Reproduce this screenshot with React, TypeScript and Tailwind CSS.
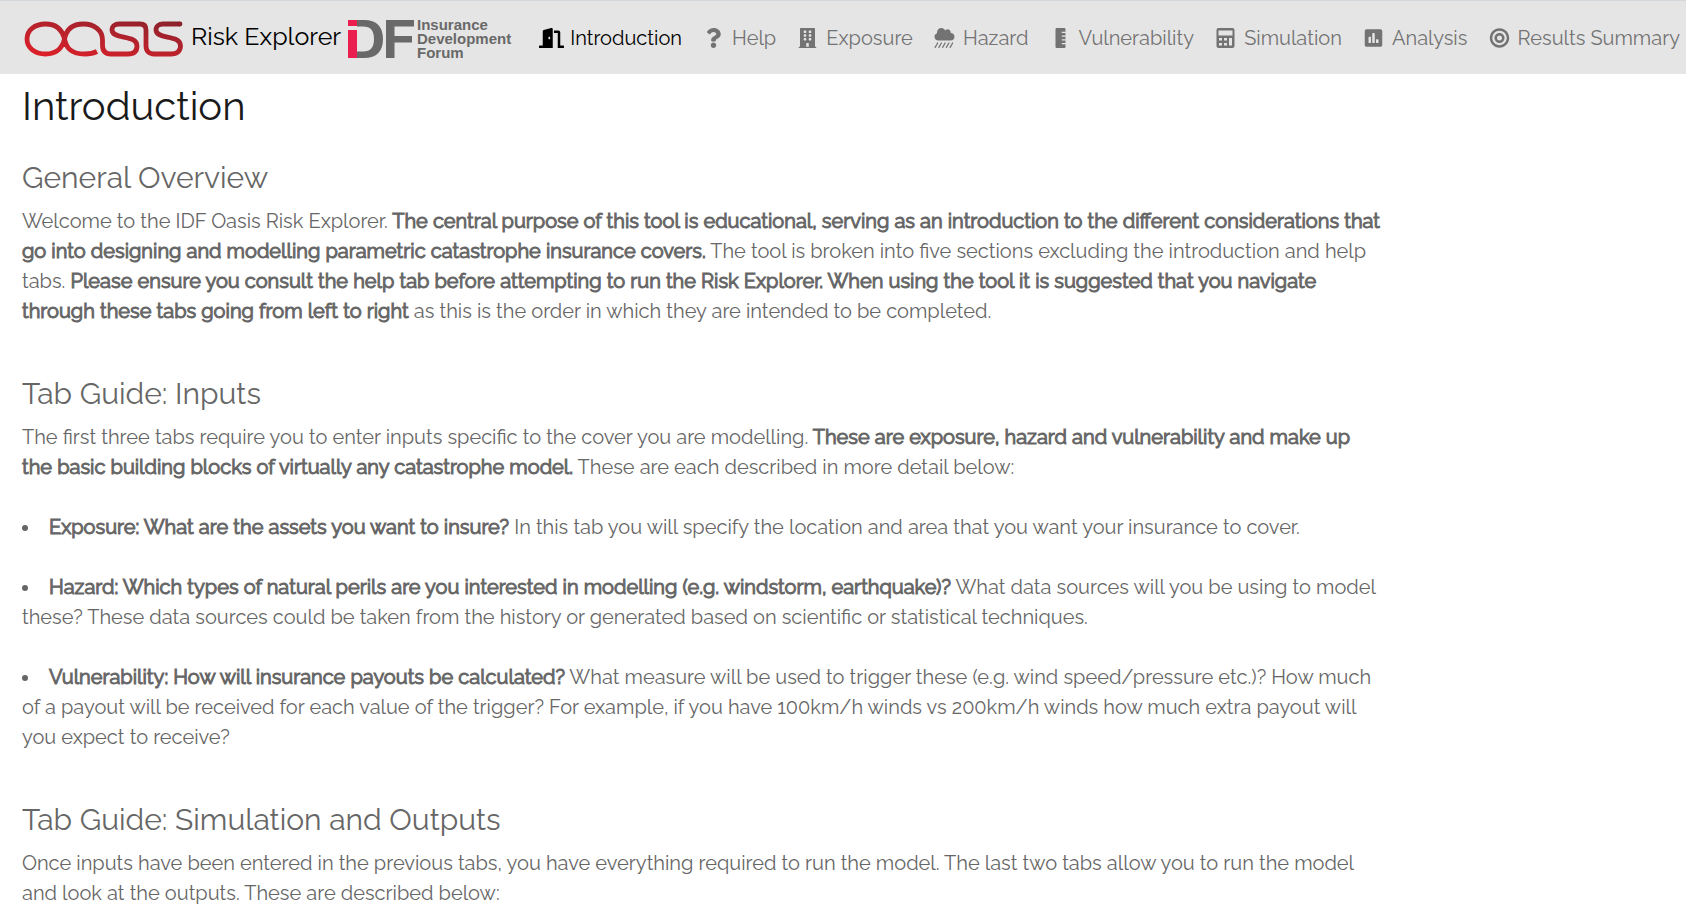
import { Fragment, type ReactNode } from "react";
import {
  FaDoorOpen,
  FaQuestion,
  FaBuilding,
  FaCloudShowersHeavy,
  FaRulerVertical,
  FaPoll,
  FaBullseye,
} from "react-icons/fa";

function CalculatorIcon({ className }: { className?: string }) {
  return (
    <svg className={className} viewBox="0 0 18 20" aria-hidden="true">
      <path
        fill="currentColor"
        fillRule="evenodd"
        d="M2 0H16Q18 0 18 2V18Q18 20 16 20H2Q0 20 0 18V2Q0 0 2 0ZM2 2.500V7.500H16V2.500ZM2.500 10V12.500H5.500V10ZM7.500 10V12.500H10.500V10ZM2.500 15V17.500H5.500V15ZM7.500 15V17.500H10.500V15ZM12.500 10V17.500H15.500V10Z"
      />
    </svg>
  );
}

const tabs = [
  { label: "Introduction", Icon: FaDoorOpen, active: true },
  { label: "Help", Icon: FaQuestion },
  { label: "Exposure", Icon: FaBuilding },
  { label: "Hazard", Icon: FaCloudShowersHeavy },
  { label: "Vulnerability", Icon: FaRulerVertical },
  { label: "Simulation", Icon: CalculatorIcon },
  { label: "Analysis", Icon: FaPoll },
  { label: "Results Summary", Icon: FaBullseye },
];

function OasisLogo() {
  return (
    <svg className="mt-0.5 h-[36px] w-[159px] shrink-0" viewBox="0 0 159 36" role="img" aria-label="Oasis">
      <defs>
        <linearGradient id="oasis-red" x1="0" y1="1" x2="1" y2="0">
          <stop offset="0" stopColor="#de2029" />
          <stop offset="0.5" stopColor="#b9222c" />
          <stop offset="1" stopColor="#8c222c" />
        </linearGradient>
      </defs>
      <path
        fill="none"
        stroke="url(#oasis-red)"
        strokeWidth="4.8"
        strokeLinejoin="round"
        d="M73 30.500C69 32.500 66 33 61 33C45 33 42 25 40.500 18C38.500 10 34 3 21.500 3C11 3 3 9 3 18C3 27 11 33 21.500 33C34 33 38.500 26 40.500 18C42 10 47 3 59.500 3C71 3 78.500 10 78.500 19V24C78.500 30 81 33 87 33H104C110 33 113 30 113 25C113 13 88 19 88 9C88 5 91 3 95 3H116C120 3 122 5 122 9V25C122 30 125 33 130 33H147C153 33 156.500 30 156.500 25C156.500 13 132 19 132 9C132 5 135 3 139 3H156"
      />
      <circle cx="156" cy="3" r="2.400" fill="#8c222c" />
    </svg>
  );
}

function ForumLogo() {
  return (
    <span className="mt-0.5 flex shrink-0 items-center gap-[3px]">
      <svg className="h-[38px] w-[66px]" viewBox="0 0 66 38" role="img" aria-label="IDF">
        <path fill="#ea1f4f" d="M0 0H9V6H0ZM0 10H9V38H0Z" />
        <path
          fill="#696969"
          fillRule="evenodd"
          d="M9 0H16C29 0 35 7 35 19C35 31 29 38 16 38H9V31.500H15C23 31.500 26 27 26 19C26 11 23 6.500 15 6.500H9ZM38 0H66V6.500H46.500V16H64V22.500H46.500V38H38Z"
        />
      </svg>
      <span className="flex flex-col font-['Liberation_Sans'] text-[15px] font-bold leading-[14px] text-[#696969]">
        <span>Insurance</span>
        <span>Development</span>
        <span>Forum</span>
      </span>
    </span>
  );
}

function Lines({ lines }: { lines: ReactNode[] }) {
  return (
    <>
      {lines.map((line, i) => (
        <Fragment key={i}>
          {i > 0 && <br />}
          {line}
        </Fragment>
      ))}
    </>
  );
}

const Strong = ({ children }: { children: ReactNode }) => (
  <strong className="font-normal [-webkit-text-stroke:1px_currentColor]">{children}</strong>
);

function Section({ title, children }: { title: string; children: ReactNode }) {
  return (
    <section className="mb-12">
      <h2 className="mb-2 text-[30px] leading-10">{title}</h2>
      {children}
    </section>
  );
}

export default function App() {
  return (
    <div className="min-h-screen overflow-x-hidden bg-white font-['Raleway','Lato',sans-serif] font-normal text-[#666666]">
      <header className="flex h-[74px] items-center border-t border-[#d3d8dd] bg-[#e5e5e5] pl-6 whitespace-nowrap">
        <OasisLogo />
        <span className="ml-2 w-[157px] shrink-0 pb-1 text-[25px] leading-8 text-black">Risk Explorer</span>
        <ForumLogo />
        <nav className="ml-7 flex grow items-center justify-between pr-[6px]">
          {tabs.map(({ label, Icon, active }) => (
            <a
              key={label}
              href="#"
              aria-current={active ? "page" : undefined}
              className={`flex items-center gap-1.5 text-[20px] leading-8 ${active ? "text-black" : "text-[#737373]"}`}
            >
              <Icon className="h-5 w-[25px]" />
              {label}
            </a>
          ))}
        </nav>
      </header>

      <main className="px-[22px] text-[20px] leading-[30px]">
        <h1 className="pt-2 pb-7 text-[40px] leading-[48px] text-[#1a1a1a]">Introduction</h1>

        <Section title="General Overview">
          <p>
            <Lines
              lines={[
                <>Welcome to the IDF Oasis Risk Explorer. <Strong>The central purpose of this tool is educational, serving as an introduction to the different considerations that</Strong></>,
                <><Strong>go into designing and modelling parametric catastrophe insurance covers.</Strong> The tool is broken into five sections excluding the introduction and help</>,
                <>tabs. <Strong>Please ensure you consult the help tab before attempting to run the Risk Explorer. When using the tool it is suggested that you navigate</Strong></>,
                <><Strong>through these tabs going from left to right</Strong> as this is the order in which they are intended to be completed.</>,
              ]}
            />
          </p>
        </Section>

        <Section title="Tab Guide: Inputs">
          <p>
            <Lines
              lines={[
                <>The first three tabs require you to enter inputs specific to the cover you are modelling. <Strong>These are exposure, hazard and vulnerability and make up</Strong></>,
                <><Strong>the basic building blocks of virtually any catastrophe model.</Strong> These are each described in more detail below:</>,
              ]}
            />
          </p>
          <ul className="mt-[30px] flex list-inside list-disc flex-col gap-[30px]">
            <li>
              <Strong>Exposure: What are the assets you want to insure?</Strong> In this tab you will specify the location and area that you want your insurance to cover.
            </li>
            <li>
              <Lines
                lines={[
                  <><Strong>Hazard: Which types of natural perils are you interested in modelling (e.g. windstorm, earthquake)?</Strong> What data sources will you be using to model</>,
                  "these? These data sources could be taken from the history or generated based on scientific or statistical techniques.",
                ]}
              />
            </li>
            <li>
              <Lines
                lines={[
                  <><Strong>Vulnerability: How will insurance payouts be calculated?</Strong> What measure will be used to trigger these (e.g. wind speed/pressure etc.)? How much</>,
                  "of a payout will be received for each value of the trigger? For example, if you have 100km/h winds vs 200km/h winds how much extra payout will",
                  "you expect to receive?",
                ]}
              />
            </li>
          </ul>
        </Section>

        <Section title="Tab Guide: Simulation and Outputs">
          <p>
            <Lines
              lines={[
                "Once inputs have been entered in the previous tabs, you have everything required to run the model. The last two tabs allow you to run the model",
                "and look at the outputs. These are described below:",
              ]}
            />
          </p>
        </Section>
      </main>
    </div>
  );
}
